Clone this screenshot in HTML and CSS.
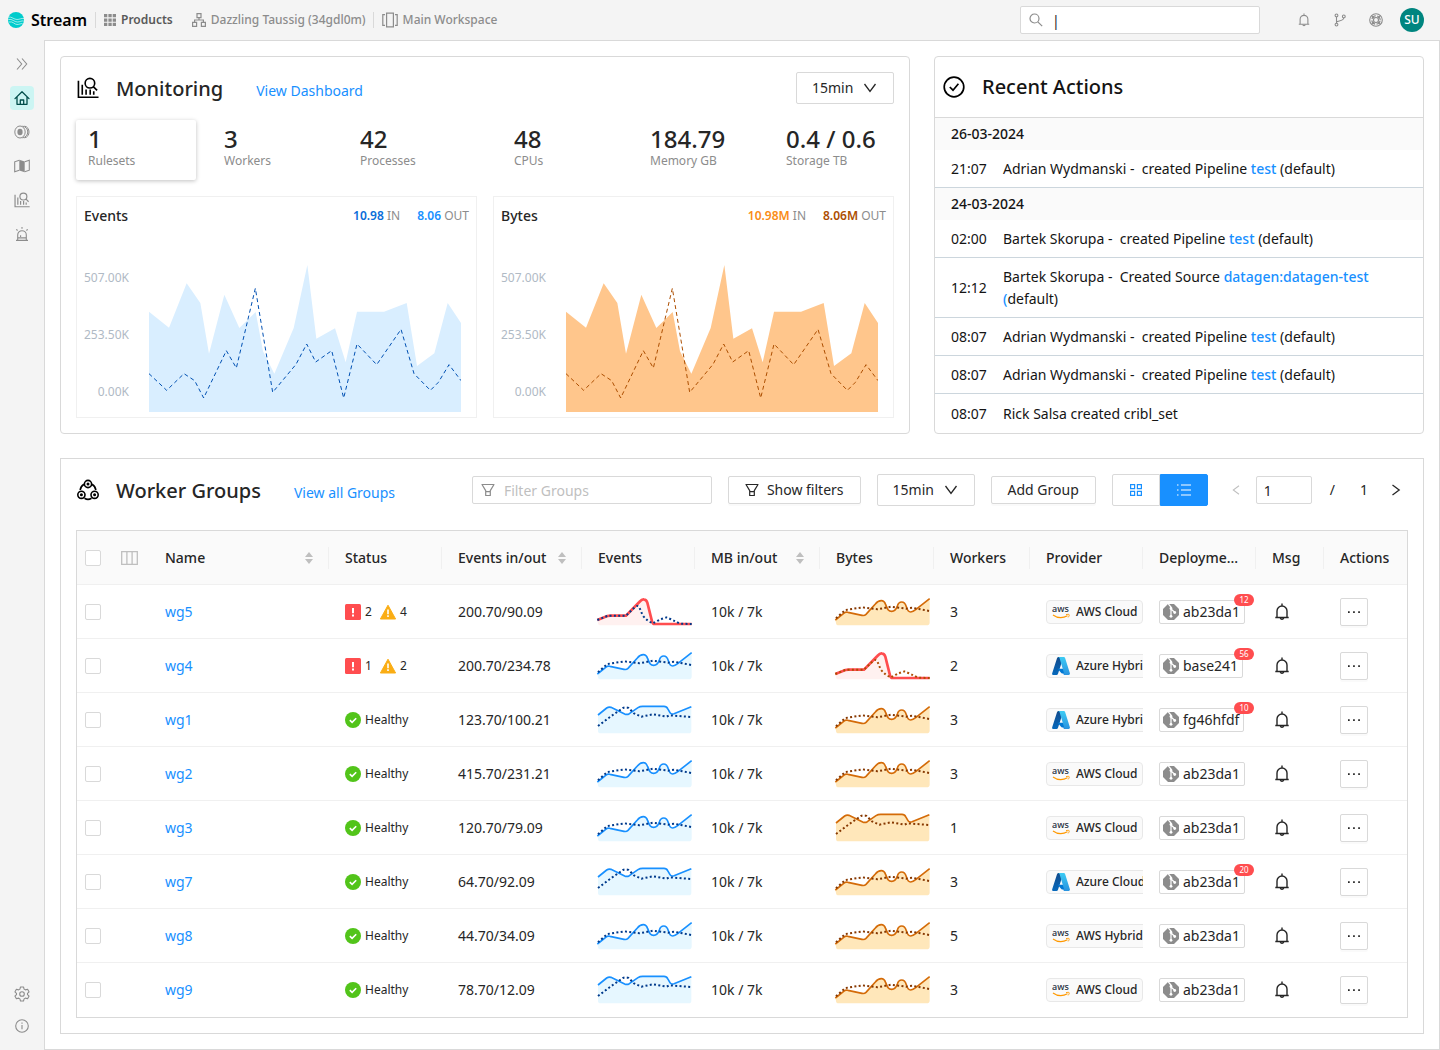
FILE: index.html
```html
<!DOCTYPE html>
<html lang="en">
<head>
    <meta charset="UTF-8">
    <meta name="viewport" content="width=device-width, initial-scale=1.0">
    <title>Stream</title>
    <link rel="stylesheet" href="styles.css">
</head>
<body>
    <!-- Icon sprite -->
    <svg class="sprite" aria-hidden="true">
        <defs>
            <linearGradient id="azureDark" x1="0" y1="0" x2="0" y2="1">
                <stop offset="0" stop-color="#114a8b"/>
                <stop offset="1" stop-color="#0669bc"/>
            </linearGradient>
            <linearGradient id="azureLight" x1="0" y1="0" x2="0" y2="1">
                <stop offset="0" stop-color="#3ccbf4"/>
                <stop offset="1" stop-color="#2892df"/>
            </linearGradient>
        </defs>
        <symbol id="logo" viewBox="0 0 16 16">
            <circle cx="8" cy="8" r="8" fill="#00cccc"/>
            <path d="M0 5C4 4.500 6 7.500 9 7.500s4-1.500 7-1M.3 7.500c4-1 6 2.500 9 2.500s4-1.500 6.400-1M1 10c4-1 5.500 2.500 8 2.500s3.500-1 5.500-1" fill="none" stroke="#fff" stroke-width=".6"/>
        </symbol>
        <symbol id="apps" viewBox="0 0 12 12">
            <path d="M0 0h3.300v3.300H0zM4.400 0h3.300v3.300H4.400zM8.700 0H12v3.300H8.700zM0 4.400h3.300v3.300H0zM4.400 4.400h3.300v3.300H4.400zM8.700 4.400H12v3.300H8.700zM0 8.700h3.300V12H0zM4.400 8.700h3.300V12H4.400zM8.700 8.700H12V12H8.700z" fill="currentColor"/>
        </symbol>
        <symbol id="org" viewBox="0 0 14 14">
            <path d="M5 .6h4v4H5zM.6 9.400h4v4h-4zM9.400 9.400h4v4h-4zM7 4.600V7M2.600 9.400V7h8.800v2.400" fill="none" stroke="currentColor" stroke-width="1.200"/>
        </symbol>
        <symbol id="workspace" viewBox="0 0 16 16">
            <path d="M4.600 1.200h6.800v13.600H4.600zM3 2.600H.8v10.800H3M13 2.600h2.200v10.800H13" fill="none" stroke="currentColor" stroke-width="1.200"/>
        </symbol>
        <symbol id="search" viewBox="0 0 14 14">
            <g fill="none" stroke="currentColor" stroke-width="1.200"><circle cx="5.500" cy="5.500" r="4.500"/><path d="M8.800 8.800l4.400 4.400"/></g>
        </symbol>
        <symbol id="bell" viewBox="0 0 16 18">
            <g fill="none" stroke="currentColor" stroke-width="1.400"><path d="M1.300 14.500h13.400M3 14.500V8a5 5 0 0 1 10 0v6.500M8 .6V3"/><path d="M6.300 15a1.800 1.800 0 0 0 3.400 0"/></g>
        </symbol>
        <symbol id="branch" viewBox="0 0 14 14">
            <g fill="none" stroke="currentColor" stroke-width="1.100"><circle cx="3.500" cy="2.400" r="1.400"/><circle cx="3.500" cy="11.600" r="1.400"/><circle cx="10.800" cy="3.400" r="1.400"/><path d="M3.500 3.800v6.400M3.500 9C5 7.500 10.500 8.500 10.800 4.800"/></g>
        </symbol>
        <symbol id="support" viewBox="0 0 14 14">
            <g fill="none" stroke="currentColor" stroke-width="1.100"><circle cx="7" cy="7" r="6.300"/><circle cx="7" cy="7" r="4.200" stroke-dasharray="5.200 1.400" stroke-dashoffset="-.7"/><circle cx="7" cy="7" r="2.500"/><path d="M2.800 2.800l2.400 2.400M11.200 2.800L8.800 5.200M2.800 11.200l2.400-2.400M11.200 11.200L8.800 8.800"/></g>
        </symbol>
        <symbol id="expand" viewBox="0 0 14 14">
            <path d="M2 1.500L6.700 7 2 12.500M7 1.500L11.700 7 7 12.500" fill="none" stroke="currentColor" stroke-width="1.100"/>
        </symbol>
        <symbol id="home" viewBox="0 0 16 16">
            <path d="M1 8.600L8 1.800l7 6.800M3 7v7.300h10V7M6.300 14.300V10h3.400v4.300" fill="none" stroke="currentColor" stroke-width="1.300" stroke-linejoin="round" stroke-linecap="round"/>
        </symbol>
        <symbol id="streams" viewBox="0 0 16 16">
            <g fill="none" stroke="currentColor" stroke-width="1"><ellipse cx="6" cy="8" rx="5.200" ry="6"/><path d="M8.500 2.100c7 1 7 10.800 0 11.800M10.500 2.100c6 1 6 10.800 0 11.800"/></g>
            <ellipse cx="6" cy="8" rx="2.600" ry="3.300" fill="currentColor"/>
        </symbol>
        <symbol id="map" viewBox="0 0 16 16">
            <path d="M5.300 2.200L.7 3.800v10l4.600-1.600M10.700 3.800l4.600-1.600v10l-4.600 1.600" fill="none" stroke="currentColor" stroke-width="1.100"/>
            <path d="M5.300 1.700l5.400 1.800v10.800l-5.400-1.800z" fill="currentColor"/>
        </symbol>
        <symbol id="monitor" viewBox="0 0 22 23">
            <g fill="none" stroke="currentColor" stroke-width="1.700"><path d="M1 4v17.200h21M5 8v10.500M9 13v5.500M13.300 13v5.500M17 15v3.500" /><circle cx="13" cy="6.500" r="5"/><path d="M16.500 10l4 4"/></g>
        </symbol>
        <symbol id="alarm" viewBox="0 0 16 16">
            <path d="M2 14.400h12M3.700 14V9a4.300 4.300 0 0 1 8.600 0v5M6.600 11V9.200M8 1v1.700M2.300 3.300l1.300 1.200M13.700 3.300l-1.300 1.200M3.500 11.900h9" fill="none" stroke="currentColor" stroke-width="1.100"/>
        </symbol>
        <symbol id="gear" viewBox="0 0 16 16">
            <g fill="none" stroke="currentColor" stroke-width="1.100" stroke-linejoin="round"><path d="M6.500 1h3l.6 2.100 1.300.8 2.200-.6 1.500 2.600-1.600 1.500v1.200l1.600 1.500-1.500 2.600-2.200-.6-1.300.8L9.500 15h-3l-.6-2.100-1.300-.8-2.200.6L.9 10.100l1.600-1.500V7.400L.9 5.900l1.500-2.600 2.200.6 1.300-.8z"/><circle cx="8" cy="8" r="2.300"/></g>
        </symbol>
        <symbol id="info" viewBox="0 0 14 14">
            <g fill="none" stroke="currentColor" stroke-width="1.100"><circle cx="7" cy="7" r="6.300"/><path d="M7 6v4.300M7 3.600v1.200"/></g>
        </symbol>
        <symbol id="down" viewBox="0 0 14 14">
            <path d="M1.500 3L7 10.500 12.500 3" fill="none" stroke="currentColor" stroke-width="1.300"/>
        </symbol>
        <symbol id="check-circle" viewBox="0 0 22 22">
            <g fill="none" stroke="currentColor" stroke-width="1.700"><circle cx="11" cy="11" r="9.800"/><path d="M6.800 11l3.200 3.200 5.400-6.400"/></g>
        </symbol>
        <symbol id="groups" viewBox="0 0 22 22">
            <g fill="none" stroke="currentColor" stroke-width="1.600"><circle cx="11" cy="5" r="3.600"/><circle cx="4.400" cy="15.800" r="3.600"/><circle cx="17.600" cy="15.800" r="3.600"/><path d="M7 5.300C4.600 6.800 3.400 8.800 3.200 11M15 5.300c2.400 1.500 3.600 3.500 3.800 5.700M7.500 19.300c2 1.200 5 1.200 7 0"/></g>
            <g fill="currentColor"><circle cx="11" cy="5" r="1.500"/><circle cx="4.400" cy="15.800" r="1.500"/><circle cx="17.600" cy="15.800" r="1.500"/></g>
        </symbol>
        <symbol id="filter" viewBox="0 0 14 14">
            <path d="M1 1.500h12L9.300 7.600V12.500H4.700V7.600zM4.700 8.700h4.600" fill="none" stroke="currentColor" stroke-width="1.200" stroke-linejoin="round"/>
        </symbol>
        <symbol id="cards" viewBox="0 0 14 14">
            <path d="M1.600 1.600h4v4h-4zM8.400 1.600h4v4h-4zM1.600 8.400h4v4h-4zM8.400 8.400h4v4h-4z" fill="none" stroke="currentColor" stroke-width="1.200"/>
        </symbol>
        <symbol id="list" viewBox="0 0 14 14">
            <path d="M4 2h10M4 7h10M4 12h10M0 2h1.500M0 7h1.500M0 12h1.500" fill="none" stroke="currentColor" stroke-width="1.200"/>
        </symbol>
        <symbol id="prev" viewBox="0 0 14 14">
            <path d="M10.500 2L3.800 7l6.700 5" fill="none" stroke="currentColor" stroke-width="1.200"/>
        </symbol>
        <symbol id="next" viewBox="0 0 14 14">
            <path d="M3.500 2l6.700 5-6.700 5" fill="none" stroke="currentColor" stroke-width="1.300"/>
        </symbol>
        <symbol id="columns" viewBox="0 0 17 14">
            <path d="M.7.7h15.600v12.600H.7zM5.900.7v12.600M11.100.7v12.600" fill="none" stroke="currentColor" stroke-width="1.300"/>
        </symbol>
        <symbol id="sort" viewBox="0 0 8 12">
            <path d="M4 0l4 5H0zM4 12L0 7h8z" fill="currentColor"/>
        </symbol>
        <symbol id="error" viewBox="0 0 16 16">
            <rect width="16" height="16" rx="1.500" fill="#ff4d4f"/>
            <path d="M7 4h2v5.200H7zM7 10.500h2v2H7z" fill="#fff"/>
        </symbol>
        <symbol id="warning" viewBox="0 0 16 16">
            <path d="M8 1.200L15.600 15H.4z" fill="#faad14" stroke="#faad14" stroke-linejoin="round"/>
            <path d="M7.200 5.500h1.600v4.700H7.200zM7.200 11.300h1.600V13H7.200z" fill="#fff"/>
        </symbol>
        <symbol id="healthy" viewBox="0 0 16 16">
            <circle cx="8" cy="8" r="8" fill="#52c41a"/>
            <path d="M4.800 8.200l2.300 2.200 4.100-4.200" fill="none" stroke="#fff" stroke-width="1.600"/>
        </symbol>
        <symbol id="aws" viewBox="0 0 18 18">
            <text x="0" y="9" class="aws-text">aws</text>
            <path d="M1 12c4.500 3.200 10 3.200 14.500.8" fill="none" stroke="#ff9900" stroke-width="1.200"/>
            <path d="M14 11.600c1.400-.3 3-.4 3.200.1.200.6-.3 1.700-1 2.700" fill="none" stroke="#ff9900" stroke-width=".9"/>
        </symbol>
        <symbol id="azure" viewBox="0 0 18 18">
            <path d="M6.200 0h5.300L6 16.700q-.4 1.300-1.500 1.300H1.200Q-.3 17.800.2 16.200L5 1.200Q5.300.2 6.200 0z" fill="url(#azureDark)"/>
            <path d="M14 11.800H5.500l4 4.500 4 1z" fill="#0078d4"/>
            <path d="M6.300 0h5.500q1 .2 1.300 1.100l4.800 15.200q.3 1.500-1.200 1.700H11q1.500-.4 1-1.900L7.600 1.200Q7.200.2 6.300 0z" fill="url(#azureLight)"/>
        </symbol>
        <symbol id="git" viewBox="0 0 16 16">
            <path d="M5 0h6l5 5v6l-5 5H5l-5-5V5z" fill="#8c8c8c"/>
            <g stroke="#fff" stroke-width="1.200" fill="none"><path d="M5.400 0L8 3v9M8 5l3.700 3.300"/></g>
            <g fill="#fff"><circle cx="8" cy="4.500" r="1.400"/><circle cx="8" cy="12.300" r="1.400"/><circle cx="11.700" cy="8.500" r="1.400"/></g>
        </symbol>
        <symbol id="more" viewBox="0 0 14 14">
            <path d="M1 6.200h1.700v1.700H1zM6.100 6.200h1.700v1.700H6.100zM11.200 6.200h1.700v1.700h-1.700z" fill="currentColor"/>
        </symbol>
    </svg>

    <div class="app">
        <header class="topbar">
            <svg class="i16"><use href="#logo"/></svg>
            <span class="brand">Stream</span>
            <a href="#" class="crumb crumb-products"><svg class="i12"><use href="#apps"/></svg>Products</a>
            <a href="#" class="crumb crumb-org"><svg class="i14"><use href="#org"/></svg>Dazzling Taussig (34gdl0m)</a>
            <a href="#" class="crumb crumb-workspace"><svg class="i16"><use href="#workspace"/></svg>Main Workspace</a>
            <div class="search">
                <svg class="i14"><use href="#search"/></svg>
                <input type="text" aria-label="Search" value="|">
            </div>
            <nav class="topbar-icons">
                <button type="button" aria-label="Notifications"><svg class="i14"><use href="#bell"/></svg></button>
                <button type="button" aria-label="Version control"><svg class="i14"><use href="#branch"/></svg></button>
                <button type="button" aria-label="Support"><svg class="i14"><use href="#support"/></svg></button>
                <button type="button" class="avatar">SU</button>
            </nav>
        </header>

        <nav class="sidebar">
            <a href="#" aria-label="Expand"><svg class="i14"><use href="#expand"/></svg></a>
            <a href="#" aria-label="Home" class="active"><svg class="i16"><use href="#home"/></svg></a>
            <a href="#" aria-label="Streams"><svg class="i16"><use href="#streams"/></svg></a>
            <a href="#" aria-label="Routes"><svg class="i16"><use href="#map"/></svg></a>
            <a href="#" aria-label="Monitoring"><svg class="i16"><use href="#monitor"/></svg></a>
            <a href="#" aria-label="Alerts"><svg class="i16"><use href="#alarm"/></svg></a>
            <div class="sidebar-bottom">
                <a href="#" aria-label="Settings"><svg class="i16"><use href="#gear"/></svg></a>
                <a href="#" aria-label="About"><svg class="i14"><use href="#info"/></svg></a>
            </div>
        </nav>

        <main class="content">
            <div class="top-row">
                <!-- Monitoring -->
                <section class="card monitoring">
                    <div class="card-header">
                        <svg class="title-icon"><use href="#monitor"/></svg>
                        <h2>Monitoring</h2>
                        <a href="#">View Dashboard</a>
                        <div class="select push">
                            <select aria-label="Monitoring period"><option>15min</option></select>
                            <svg class="i14"><use href="#down"/></svg>
                        </div>
                    </div>
                    <div class="stats">
                        <div class="stat-group">
                            <div class="stat selected"><strong>1</strong><span>Rulesets</span></div>
                            <div class="stat"><strong>3</strong><span>Workers</span></div>
                            <div class="stat"><strong>42</strong><span>Processes</span></div>
                        </div>
                        <div class="stat-group">
                            <div class="stat"><strong>48</strong><span>CPUs</span></div>
                            <div class="stat"><strong>184.79</strong><span>Memory GB</span></div>
                            <div class="stat"><strong>0.4 / 0.6</strong><span>Storage TB</span></div>
                        </div>
                    </div>
                    <div class="charts">
                        <div class="chart chart-events">
                            <div class="chart-header">
                                <h3>Events</h3>
                                <span><b class="in">10.98</b> IN</span>
                                <span><b class="out">8.06</b> OUT</span>
                            </div>
                            <div class="chart-body">
                                <div class="axis"><span>507.00K</span><span>253.50K</span><span>0.00K</span></div>
                                <svg class="plot" viewBox="0 0 936 447" preserveAspectRatio="none">
                                    <polygon class="area" points="0,146 60,194 113,61 154,120 180,272 226,95 271,195 320,147 342,265 376,332 434,195 475,6 502,227 558,196 590,298 624,146 705,146 773,120 804,309 856,271 896,120 936,180 936,447 0,447"/>
                                    <polyline class="line" points="0,332 53,382 105,332 137,353 164,405 232,263 262,315 319,76 371,388 441,304 473,243 500,297 548,263 584,405 624,243 683,305 756,199 795,332 844,382 868,358 900,305 936,353"/>
                                </svg>
                            </div>
                        </div>
                        <div class="chart chart-bytes">
                            <div class="chart-header">
                                <h3>Bytes</h3>
                                <span><b class="in">10.98M</b> IN</span>
                                <span><b class="out">8.06M</b> OUT</span>
                            </div>
                            <div class="chart-body">
                                <div class="axis"><span>507.00K</span><span>253.50K</span><span>0.00K</span></div>
                                <svg class="plot" viewBox="0 0 936 447" preserveAspectRatio="none">
                                    <polygon class="area" points="0,146 60,194 113,61 154,120 180,272 226,95 271,195 320,147 342,265 376,332 434,195 475,6 502,227 558,196 590,298 624,146 705,146 773,120 804,309 856,271 896,120 936,180 936,447 0,447"/>
                                    <polyline class="line" points="0,332 53,382 105,332 137,353 164,405 232,263 262,315 319,76 371,388 441,304 473,243 500,297 548,263 584,405 624,243 683,305 756,199 795,332 844,382 868,358 900,305 936,353"/>
                                </svg>
                            </div>
                        </div>
                    </div>
                </section>

                <!-- Recent actions -->
                <section class="card recent">
                    <div class="recent-header">
                        <svg class="title-icon"><use href="#check-circle"/></svg>
                        <h2>Recent Actions</h2>
                    </div>
                    <h3 class="day">26-03-2024</h3>
                    <div class="action"><time>21:07</time><p>Adrian Wydmanski -&nbsp; created Pipeline <a href="#">test</a> (default)</p></div>
                    <h3 class="day">24-03-2024</h3>
                    <div class="action"><time>02:00</time><p>Bartek Skorupa -&nbsp; created Pipeline <a href="#">test</a> (default)</p></div>
                    <div class="action"><time>12:12</time><p>Bartek Skorupa -&nbsp; Created Source <a href="#">datagen:datagen-test (</a>default)</p></div>
                    <div class="action"><time>08:07</time><p>Adrian Wydmanski -&nbsp; created Pipeline <a href="#">test</a> (default)</p></div>
                    <div class="action"><time>08:07</time><p>Adrian Wydmanski -&nbsp; created Pipeline <a href="#">test</a> (default)</p></div>
                    <div class="action"><time>08:07</time><p>Rick Salsa created cribl_set</p></div>
                </section>
            </div>

            <!-- Worker groups -->
            <section class="card groups">
                <div class="card-header">
                    <svg class="title-icon"><use href="#groups"/></svg>
                    <h2>Worker Groups</h2>
                    <a href="#">View all Groups</a>
                    <div class="toolbar">
                        <div class="filter">
                            <svg class="i14"><use href="#filter"/></svg>
                            <input type="text" aria-label="Filter Groups" placeholder="Filter Groups">
                        </div>
                        <button type="button" class="btn"><svg class="i14"><use href="#filter"/></svg>Show filters</button>
                        <div class="select">
                            <select aria-label="Groups period"><option>15min</option></select>
                            <svg class="i14"><use href="#down"/></svg>
                        </div>
                        <button type="button" class="btn">Add Group</button>
                        <div class="view-switch">
                            <button type="button" aria-label="Card view"><svg class="i14"><use href="#cards"/></svg></button>
                            <button type="button" aria-label="List view" class="on"><svg class="i14"><use href="#list"/></svg></button>
                        </div>
                        <div class="pager">
                            <button type="button" aria-label="Previous page" disabled><svg class="i12"><use href="#prev"/></svg></button>
                            <input type="text" aria-label="Page" value="1">
                            <span class="slash">/</span>
                            <span class="total">1</span>
                            <button type="button" aria-label="Next page"><svg class="i14"><use href="#next"/></svg></button>
                        </div>
                    </div>
                </div>
                <table>
                    <colgroup>
                        <col class="c-check"><col class="c-cols"><col class="c-name"><col class="c-mid"><col class="c-evio"><col class="c-mid"><col class="c-mbio"><col class="c-bytes"><col class="c-workers"><col class="c-mid"><col class="c-mid"><col class="c-msg"><col class="c-actions">
                    </colgroup>
                    <thead>
                        <tr>
                            <th class="tight"><input type="checkbox" aria-label="Select all"></th>
                            <th class="cols-icon"><svg><use href="#columns"/></svg></th>
                            <th class="sep"><div>Name<svg><use href="#sort"/></svg></div></th>
                            <th class="sep">Status</th>
                            <th class="sep"><div>Events in/out<svg><use href="#sort"/></svg></div></th>
                            <th class="sep">Events</th>
                            <th class="sep"><div>MB in/out<svg><use href="#sort"/></svg></div></th>
                            <th class="sep">Bytes</th>
                            <th class="sep">Workers</th>
                            <th class="sep">Provider</th>
                            <th class="sep">Deployments</th>
                            <th class="sep">Msg</th>
                            <th>Actions</th>
                        </tr>
                    </thead>
                    <tbody id="groupRows"></tbody>
                </table>
            </section>
        </main>
    </div>

    <script src="script.js"></script>
</body>
</html>
```
FILE: styles.css
```css
* {
    box-sizing: border-box;
}

body {
    margin: 0;
    font-family: "Noto Sans", "Open Sans", sans-serif;
    font-size: 14px;
    line-height: 22px;
    color: #262626;
    background: #f4f4f4;
}

h2, h3, p {
    margin: 0;
}

h2 {
    font-size: 20px;
    line-height: 28px;
    font-weight: 500;
}

h3 {
    font-size: 14px;
    font-weight: 500;
}

a {
    color: #1890ff;
    text-decoration: none;
}

svg {
    display: block;
    flex: none;
}

button, input, select {
    font: inherit;
    color: inherit;
}

button {
    display: flex;
    align-items: center;
    justify-content: center;
    padding: 0;
    border: none;
    background: none;
    cursor: pointer;
}

.sprite {
    position: absolute;
    width: 0;
    height: 0;
}

.aws-text {
    font-size: 9px;
    font-weight: 500;
    fill: #252f3e;
}

.i12 { width: 12px; height: 12px; }
.i14 { width: 14px; height: 14px; }
.i16 { width: 16px; height: 16px; }

.app {
    display: grid;
    grid-template-columns: 44px 1fr;
    grid-template-rows: 40px 1fr;
    min-height: 100vh;
}

/* Top bar */
.topbar {
    grid-column: 1 / 3;
    display: flex;
    align-items: center;
    padding: 0 16px 0 8px;
}

.brand {
    margin: 0 8px 0 7px;
    font-size: 16px;
    font-weight: 600;
    color: #000;
}

.crumb {
    display: flex;
    align-items: center;
    gap: 5px;
    height: 16px;
    font-size: 12px;
    font-weight: 500;
    color: #8c8c8c;
}

.crumb-products {
    padding-left: 8px;
    border-left: 1px solid #d9d9d9;
    margin-right: 19px;
    font-weight: 600;
    color: #595959;
}

.crumb-products svg {
    color: #8c8c8c;
}

.crumb-workspace {
    margin-left: 7px;
    padding-left: 8px;
    border-left: 1px solid #d9d9d9;
}

.search,
.filter {
    position: relative;
    width: 240px;
}

.search {
    margin-left: auto;
}

.search svg,
.filter svg {
    position: absolute;
    left: 9px;
    top: 7px;
    color: #8c8c8c;
}

.search input,
.filter input,
.pager input {
    display: block;
    width: 100%;
    height: 28px;
    padding: 0 8px 0 31px;
    border: 1px solid #d9d9d9;
    border-radius: 2px;
    background: #fff;
}

.filter input::placeholder {
    color: #bfbfbf;
    opacity: 1;
}

.topbar-icons {
    display: flex;
    gap: 12px;
    margin-left: 32px;
}

.topbar-icons button {
    width: 24px;
    height: 24px;
    color: #8c8c8c;
}

.topbar-icons .avatar {
    border-radius: 50%;
    background: #00857f;
    font-size: 12px;
    font-weight: 500;
    color: #fff;
}

/* Sidebar */
.sidebar {
    display: flex;
    flex-direction: column;
    align-items: center;
    gap: 10px;
    padding: 12px 0;
}

.sidebar a {
    display: flex;
    align-items: center;
    justify-content: center;
    width: 24px;
    height: 24px;
    border-radius: 4px;
    color: #8c8c8c;
}

.sidebar a.active {
    background: #ccf5f3;
    color: #004d4a;
}

.sidebar-bottom {
    display: flex;
    flex-direction: column;
    gap: 8px;
    margin-top: auto;
}

/* Content */
.content {
    min-width: 0;
    padding: 15px;
    border: 1px solid #d9d9d9;
    background: #fff;
}

.top-row {
    display: grid;
    grid-template-columns: 85fr 49fr;
    gap: 24px;
    margin-bottom: 24px;
}

.card {
    border: 1px solid #d9d9d9;
    border-radius: 4px;
    background: #fff;
}

.card-header {
    display: flex;
    align-items: center;
    height: 32px;
}

.card-header h2 {
    padding-top: 2px;
}

.card-header > a {
    margin-left: 33px;
    padding-top: 5px;
}

.title-icon {
    width: 22px;
    height: 22px;
    margin: 0 17px 0 1px;
    color: #000;
}

.push {
    margin-left: auto;
}

.select {
    position: relative;
    width: 98px;
}

.select select {
    display: block;
    width: 100%;
    height: 32px;
    padding: 0 15px;
    appearance: none;
    border: 1px solid #d9d9d9;
    border-radius: 2px;
    background: #fff;
}

.select svg {
    position: absolute;
    top: 9px;
    right: 17px;
    pointer-events: none;
}

/* Monitoring */
.monitoring {
    padding: 15px;
}

.stats {
    display: flex;
    justify-content: space-between;
    margin: 16px 0;
}

.stat-group {
    display: flex;
    gap: 16px;
}

.stat {
    width: 120px;
    height: 60px;
    padding: 5px 12px;
    border-radius: 2px;
    white-space: nowrap;
}

.stat.selected {
    box-shadow: 0 1px 4px rgba(0, 0, 0, 0.25);
}

.stat strong {
    display: block;
    font-size: 24px;
    line-height: 28px;
    font-weight: 500;
}

.stat span {
    display: block;
    font-size: 12px;
    line-height: 16px;
    color: #8c8c8c;
}

.charts {
    display: grid;
    grid-template-columns: 1fr 1fr;
    gap: 16px;
}

.chart {
    padding: 8px 7px 5px;
    border: 1px solid #f0f0f0;
}

.chart-header {
    display: flex;
    gap: 17px;
    font-size: 12px;
    color: #8c8c8c;
}

.chart-header h3 {
    margin-right: auto;
    color: #262626;
}

.chart-header b {
    font-weight: 600;
}

.chart-body {
    display: flex;
    align-items: flex-end;
    gap: 20px;
    padding: 36px 8px 0 0;
}

.axis {
    display: flex;
    flex-direction: column;
    justify-content: space-between;
    height: 134px;
    margin-bottom: 10px;
    font-size: 12px;
    line-height: 20px;
    text-align: right;
    color: #b0bac5;
}

.plot {
    flex: 1;
    min-width: 0;
    height: 149px;
}

.plot .line {
    fill: none;
    stroke-width: 1;
    stroke-dasharray: 4 3;
    vector-effect: non-scaling-stroke;
}

.chart-events .area { fill: #d9eeff; }
.chart-events .line { stroke: #0050b3; }
.chart-events .in { color: #096dd9; }
.chart-events .out { color: #1890ff; }
.chart-bytes .area { fill: #ffc68c; }
.chart-bytes .line { stroke: #ad4e00; }
.chart-bytes .in { color: #fa8c16; }
.chart-bytes .out { color: #ad4e00; }

/* Recent actions */
.recent {
    display: flex;
    flex-direction: column;
    overflow: hidden;
    color: #141414;
}

.recent-header {
    display: flex;
    align-items: center;
    height: 61px;
    padding-left: 7px;
    border-bottom: 1px solid #d9d9d9;
}

.day {
    padding: 5px 16px;
    background: #fafafa;
}

.action {
    display: grid;
    grid-template-columns: 52px 1fr;
    align-items: center;
    padding: 8px 40px 7px 16px;
    border-bottom: 1px solid #ccd6dd;
}

.action:last-child {
    flex: 1;
    border-bottom: none;
}

.action a {
    font-weight: 500;
}

/* Worker groups */
.groups {
    padding: 15px;
    border-radius: 0;
}

.groups .card-header {
    margin-bottom: 24px;
}

.toolbar {
    display: flex;
    align-items: center;
    gap: 16px;
    margin-left: auto;
}

.btn {
    height: 28px;
    padding: 0 16px;
    gap: 8px;
    border: 1px solid #d9d9d9;
    border-radius: 2px;
    box-shadow: 0 2px 0 rgba(0, 0, 0, 0.02);
    background: #fff;
    white-space: nowrap;
}

.view-switch {
    display: flex;
}

.view-switch button {
    width: 48px;
    height: 32px;
    border: 1px solid #d9d9d9;
    border-radius: 2px 0 0 2px;
    color: #1890ff;
}

.view-switch button.on {
    border-color: #1890ff;
    border-radius: 0 2px 2px 0;
    background: #1890ff;
    color: #fff;
}

.pager {
    display: flex;
    align-items: center;
}

.pager button {
    width: 24px;
    height: 24px;
}

.pager button:disabled {
    color: #bfbfbf;
}

.pager input {
    width: 56px;
    margin: 0 18px 0 8px;
    padding: 0 7px;
}

.pager .total {
    margin: 0 16px 0 25px;
}

table {
    width: 100%;
    table-layout: fixed;
    border: 1px solid #d9d9d9;
    border-collapse: separate;
    border-spacing: 0;
}

.c-check { width: 32px; }
.c-cols { width: 40px; }
.c-name { width: 180px; }
.c-mid { width: 113px; }
.c-evio { width: 140px; }
.c-mbio { width: 125px; }
.c-bytes { width: 114px; }
.c-workers { width: 96px; }
.c-msg { width: 68px; }
.c-actions { width: 83px; }

th, td {
    height: 54px;
    padding: 0 16px;
    border-bottom: 1px solid #f0f0f0;
    text-align: left;
    white-space: nowrap;
}

th {
    overflow: hidden;
    background: #fafafa;
    font-weight: 500;
    text-overflow: ellipsis;
}

tbody tr:last-child td {
    border-bottom: none;
}

.sep {
    background: linear-gradient(#f0f0f0, #f0f0f0) right center / 1px 22px no-repeat #fafafa;
}

th div {
    display: flex;
    align-items: center;
    justify-content: space-between;
}

th div svg {
    width: 8px;
    height: 12px;
    color: #bfbfbf;
}

.tight {
    padding: 0 8px;
}

.cols-icon {
    padding: 0 12px;
}

.cols-icon svg {
    width: 17px;
    height: 14px;
    color: #bfbfbf;
}

input[type="checkbox"] {
    display: block;
    width: 16px;
    height: 16px;
    margin: 0;
    appearance: none;
    border: 1px solid #d9d9d9;
    border-radius: 2px;
    background: #fff;
}

.status {
    display: flex;
    align-items: center;
    gap: 4px;
    font-size: 12px;
}

.status svg + span + svg {
    margin-left: 4px;
}

td.spark {
    padding: 0 0 0 16px;
}

.spark svg {
    width: 94px;
    height: 28px;
    overflow: visible;
}

.spark .line,
.spark .dots {
    fill: none;
    stroke-width: 5;
}

.spark .dots {
    stroke-width: 6;
    stroke-dasharray: 6 7;
}

.blue .fill { fill: #e6f7ff; }
.blue .line { stroke: #1890ff; }
.blue .dots { stroke: #003a8c; }
.orange .fill { fill: #ffe7ba; }
.orange .line { stroke: #d46b08; }
.orange .dots { stroke: #873800; }
.spark .alert .fill { fill: #fff1f0; }
.spark .alert .line { stroke: #ff4d4f; stroke-width: 8; }
.orange.alert .dots { stroke: #ad4e00; }

td.provider {
    padding: 0 0 0 16px;
}

.provider div {
    overflow: hidden;
}

.provider-tag {
    display: flex;
    align-items: center;
    gap: 6px;
    width: max-content;
    height: 24px;
    padding: 0 4px 0 5px;
    border: 1px solid #e8e8e8;
    border-radius: 4px;
    background: #fafafa;
    font-size: 12px;
    font-weight: 500;
}

.provider-tag svg {
    width: 18px;
    height: 18px;
}

.deploy {
    position: relative;
}

.deploy-tag {
    display: flex;
    align-items: center;
    gap: 4px;
    width: max-content;
    height: 24px;
    padding: 0 4px 0 3px;
    border: 1px solid #d9d9d9;
    border-radius: 2px;
}

.badge {
    position: absolute;
    top: -6px;
    left: 75px;
    min-width: 20px;
    height: 12px;
    border-radius: 6px;
    background: #ff4d4f;
    font-size: 8px;
    line-height: 12px;
    text-align: center;
    color: #fff;
}

td button {
    width: 28px;
    height: 28px;
}

td.msg {
    padding: 0 12px;
}

.msg svg {
    width: 16px;
    height: 18px;
}

.more {
    border: 1px solid #d9d9d9;
    border-radius: 2px;
    box-shadow: 0 2px 0 rgba(0, 0, 0, 0.02);
}
```
FILE: script.js
```js
const groups = [
    { name: 'wg5', errors: 2, warnings: 4, events: '200.70/90.09', eventsChart: 'alert', bytesChart: 'wave', workers: 3, provider: 'AWS Cloud', deployment: 'ab23da1', badge: 12 },
    { name: 'wg4', errors: 1, warnings: 2, events: '200.70/234.78', eventsChart: 'wave', bytesChart: 'alert', workers: 2, provider: 'Azure Hybrid', deployment: 'base241', badge: 56 },
    { name: 'wg1', events: '123.70/100.21', eventsChart: 'flat', bytesChart: 'wave', workers: 3, provider: 'Azure Hybrid', deployment: 'fg46hfdf', badge: 10 },
    { name: 'wg2', events: '415.70/231.21', eventsChart: 'wave', bytesChart: 'wave', workers: 3, provider: 'AWS Cloud', deployment: 'ab23da1' },
    { name: 'wg3', events: '120.70/79.09', eventsChart: 'wave', bytesChart: 'flat', workers: 1, provider: 'AWS Cloud', deployment: 'ab23da1' },
    { name: 'wg7', events: '64.70/92.09', eventsChart: 'flat', bytesChart: 'wave', workers: 3, provider: 'Azure Cloud', deployment: 'ab23da1', badge: 20 },
    { name: 'wg8', events: '44.70/34.09', eventsChart: 'wave', bytesChart: 'wave', workers: 5, provider: 'AWS Hybrid', deployment: 'ab23da1' },
    { name: 'wg9', events: '78.70/12.09', eventsChart: 'flat', bytesChart: 'wave', workers: 3, provider: 'AWS Cloud', deployment: 'ab23da1' }
];

// in / out lines of the small charts
const shapes = {
    wave: {
        line: 'M-2 66L26 44Q30 41 36 43L78 52Q85 54 90 49L118 18Q126 8 136 8Q145 8 149 20C155 36 158 40 167 40C176 40 180 36 184 24C187 14 190 12 197 12C204 12 208 16 211 26C214 38 217 42 224 42Q230 42 240 34L281 2',
        dots: 'M0 61L28 36L80 28L125 34L165 26L210 32L228 29L280 39'
    },
    flat: {
        line: 'M0 27L26 6Q32 2 39 4L80 24Q87 27 94 23L120 5Q126 1 134 1L198 1Q206 1 209 8L216 20Q219 26 228 23L280 2',
        dots: 'M0 60L40 30L75 6Q83 3 92 6L108 22L130 32L165 25L205 32L215 28L280 33'
    },
    alert: {
        line: 'M-2 66L28 54Q32 53 38 53L84 53L124 12Q132 3 138 4Q145 5 148 14L162 70Q164 78 170 78L281 78',
        dots: 'M-2 66L28 54Q32 53 38 53L84 53L110 28Q119 20 124 28L134 52Q148 70 165 76Q180 66 205 58Q222 64 245 77L281 78'
    }
};

function icon(id, cls) {
    return `<svg class="${cls || 'i16'}"><use href="#${id}"/></svg>`;
}

function sparkline(shape, color) {
    const s = shapes[shape];
    return `<svg class="${color} ${shape}" viewBox="0 0 282 84">
        <path class="fill" d="${s.line}V74Q280 82 272 82H8Q0 82 0 74Z"/>
        <path class="line" d="${s.line}"/>
        <path class="dots" d="${s.dots}"/>
    </svg>`;
}

function status(g) {
    if (g.errors) {
        return `${icon('error')}<span>${g.errors}</span>${icon('warning')}<span>${g.warnings}</span>`;
    }
    return `${icon('healthy')}<span>Healthy</span>`;
}

document.getElementById('groupRows').innerHTML = groups.map(g => `
    <tr>
        <td class="tight"><input type="checkbox" aria-label="Select ${g.name}"></td>
        <td></td>
        <td><a href="#">${g.name}</a></td>
        <td><div class="status">${status(g)}</div></td>
        <td>${g.events}</td>
        <td class="spark">${sparkline(g.eventsChart, 'blue')}</td>
        <td>10k / 7k</td>
        <td class="spark">${sparkline(g.bytesChart, 'orange')}</td>
        <td>${g.workers}</td>
        <td class="provider"><div><span class="provider-tag">${icon(g.provider.startsWith('AWS') ? 'aws' : 'azure')}${g.provider}</span></div></td>
        <td><div class="deploy"><span class="deploy-tag">${icon('git')}${g.deployment}</span>${g.badge ? `<span class="badge">${g.badge}</span>` : ''}</div></td>
        <td class="msg"><button type="button" aria-label="Messages">${icon('bell')}</button></td>
        <td><button type="button" class="more" aria-label="More actions">${icon('more', 'i14')}</button></td>
    </tr>`).join('');
```
